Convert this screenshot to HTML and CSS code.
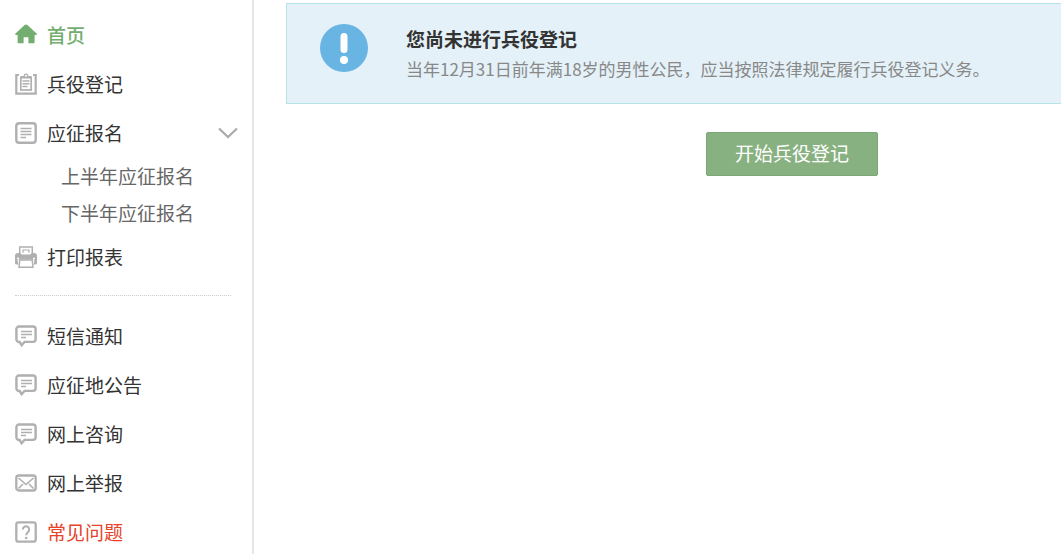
FILE: index.html
```html
<!DOCTYPE html>
<html lang="zh-CN">
<head>
<meta charset="utf-8">
<meta name="viewport" content="width=device-width, initial-scale=1">
<title>兵役登记</title>
<link rel="stylesheet" href="styles.css">
</head>
<body>
<svg class="symbols" aria-hidden="true">
  <symbol id="i-message" viewBox="0 0 22 22">
    <path d="M4 1.500h14a2.600 2.600 0 0 1 2.600 2.600v10.200a2.600 2.600 0 0 1-2.600 2.600H9.500L6.600 20.200 4.600 16.900A2.600 2.600 0 0 1 1.400 14.300v-10.200A2.600 2.600 0 0 1 4 1.500z" fill="none" stroke="currentColor" stroke-width="2.400"/>
    <path d="M6 6.500h11M6 9.500h11M6 12.500h5" stroke="currentColor" stroke-width="1.300"/>
  </symbol>
</svg>
<div class="layout">
  <nav class="sidebar">
    <ul class="menu">
      <li><a class="item item-active" href="#">
        <svg class="icon" viewBox="0 0 22 22"><path d="M11 0.500a2 2 0 0 1 1.400.6l9.200 8.400c.5.6.2 1.400-.6 1.400h-1.400v7.300c0 .6-.4 1-1 1h-5.200v-6H8.600v6H3.600c-.6 0-1-.4-1-1v-7.300H1c-.8 0-1-.8-.5-1.400L9.600 1.100A2 2 0 0 1 11 .5z" fill="currentColor"/></svg>首页</a></li>
      <li><a class="item" href="#">
        <svg class="icon" viewBox="0 0 22 22"><path d="M4 2H1.300v18.700h19.400V2H18" fill="none" stroke="currentColor" stroke-width="2.200"/><rect x="5.800" y="4.200" width="10.400" height="12.800" fill="none" stroke="currentColor" stroke-width="1.700"/><path d="M6 5.500V3h2.600a2.400 2.400 0 0 1 4.800 0H16v2.500z" fill="currentColor"/><circle cx="11" cy="2.800" r="1" fill="#fff"/><path d="M7.500 8h7M7.500 10.700h7M7.500 13.400h5" stroke="currentColor" stroke-width="1.500"/></svg>兵役登记</a></li>
      <li>
        <a class="item" href="#">
        <svg class="icon" viewBox="0 0 22 22"><rect x="1.300" y="1.300" width="19.400" height="19.400" rx="2.800" fill="none" stroke="currentColor" stroke-width="2.400"/><path d="M5.500 6.500h11M5.500 9.500h11M5.500 12.500h11M5.500 15.500h5.500" stroke="currentColor" stroke-width="1.300"/></svg>应征报名
        <svg class="chevron" viewBox="0 0 20 12"><path d="M1 1.500l9 8.500 9-8.500" fill="none" stroke="currentColor" stroke-width="2.200"/></svg></a>
        <ul class="submenu">
          <li><a class="subitem" href="#">上半年应征报名</a></li>
          <li><a class="subitem" href="#">下半年应征报名</a></li>
        </ul></li>
      <li><a class="item" href="#">
        <svg class="icon" viewBox="0 0 22 22"><path d="M4.700 8V.9h12.600V8" fill="none" stroke="currentColor" stroke-width="1.500"/><path d="M8 6.800V4h6v2.800" fill="none" stroke="currentColor" stroke-width="1.200"/><path d="M3 7h2.500l1 1.500h9l1-1.500H19a3 3 0 0 1 3 3v7a1.500 1.500 0 0 1-1.500 1.500h-19A1.500 1.500 0 0 1 0 17v-7a3 3 0 0 1 3-3z" fill="currentColor"/><path d="M2 12.300h2M18 12.300h2" stroke="#fff" stroke-width="1.200"/><path d="M2.500 13.500h17l-1.200 7.700H3.700z" fill="#fff"/><path d="M4.800 14h12.400l.8 7.200H4z" fill="#fff" stroke="currentColor" stroke-width="1.500"/></svg>打印报表</a></li>
    </ul>
    <hr class="divider">
    <ul class="menu">
      <li><a class="item" href="#"><svg class="icon"><use href="#i-message"/></svg>短信通知</a></li>
      <li><a class="item" href="#"><svg class="icon"><use href="#i-message"/></svg>应征地公告</a></li>
      <li><a class="item" href="#"><svg class="icon"><use href="#i-message"/></svg>网上咨询</a></li>
      <li><a class="item" href="#">
        <svg class="icon" viewBox="0 0 22 22"><rect x="1.300" y="3.500" width="19.400" height="15" rx="2.500" fill="none" stroke="currentColor" stroke-width="2.300"/><path d="M3.500 6l7.500 6.500 7.500-6.500M3.500 16.500l4.500-4.500M18.500 16.500L14 12" fill="none" stroke="currentColor" stroke-width="1.600"/></svg>网上举报</a></li>
      <li><a class="item item-alert" href="#">
        <svg class="icon" viewBox="0 0 22 22"><rect x="1.300" y="1.300" width="19.400" height="19.400" rx="2.200" fill="none" stroke="currentColor" stroke-width="2.300"/><path d="M7.800 8.500a3.200 3.200 0 1 1 5.400 2.300c-1.200 1.100-2 1.600-2 3.400" fill="none" stroke="currentColor" stroke-width="2"/><circle cx="11.200" cy="17" r="1.300" fill="currentColor"/></svg>常见问题</a></li>
    </ul>
  </nav>
  <main class="content">
    <section class="notice">
      <svg class="notice-icon" viewBox="0 0 48 48"><circle cx="24" cy="24" r="24" fill="#68b4e2"/><rect x="20.500" y="9" width="7" height="20" rx="3.500" fill="#fff"/><circle cx="24" cy="36" r="4" fill="#fff"/></svg>
      <div class="notice-text">
        <h1 class="notice-title">您尚未进行兵役登记</h1>
        <p class="notice-desc">当年12月31日前年满18岁的男性公民，应当按照法律规定履行兵役登记义务。</p>
      </div>
    </section>
    <button class="start" type="button">开始兵役登记</button>
  </main>
</div>
</body>
</html>
```

FILE: styles.css
```css
* {
  box-sizing: border-box;
}

body {
  margin: 0;
  background: #fff;
  color: #333;
  font: 19px/33px "Noto Sans CJK SC", sans-serif;
}

ul {
  margin: 0;
  padding: 0;
  list-style: none;
}

a {
  color: inherit;
  text-decoration: none;
}

.symbols {
  display: none;
}

.layout {
  display: flex;
  min-height: 100vh;
}

.sidebar {
  flex: 0 0 254px;
  padding: 18px 14px 0 15px;
  border-right: 2px solid #e6e6e6;
}

.menu {
  display: flex;
  flex-direction: column;
  gap: 16px;
}

.item {
  display: flex;
  align-items: center;
  gap: 10px;
}

.item-active {
  color: #73ae70;
  font-weight: 500;
}

.item-alert {
  color: #e8432a;
}

.icon {
  flex: none;
  width: 22px;
  height: 22px;
  color: #b0b0b0;
}

.item-active .icon {
  color: #73ae70;
}

.chevron {
  width: 20px;
  height: 12px;
  margin-left: auto;
  color: #aaa;
}

.submenu {
  margin-bottom: -7px;
  padding: 8px 0 0 46px;
  color: #666;
}

.subitem {
  display: block;
  line-height: 37px;
}

.divider {
  margin: 22px 7px 23px 0;
  border: 0;
  border-top: 1px dotted #ccc;
}

.content {
  flex: 1;
  min-width: 0;
  padding: 3px 0 0 32px;
}

.notice {
  display: flex;
  gap: 38px;
  padding: 20px 0 19px 33px;
  border: 1px solid #b7e2e8;
  border-right: 0;
  background: #e4f1f8;
}

.notice-icon {
  flex: none;
  width: 48px;
  height: 48px;
}

.notice-title,
.notice-desc {
  margin: 0;
  line-height: 30px;
}

.notice-title {
  font-size: 19px;
  font-weight: 700;
}

.notice-desc {
  color: #888;
  font-size: 17px;
}

.start {
  display: block;
  margin: 28px 0 0 420px;
  padding: 4px 28px 6px;
  border: 1px solid #7ba677;
  border-radius: 2px;
  background: #88b181;
  color: #fff;
  font: inherit;
  line-height: 32px;
}
```
